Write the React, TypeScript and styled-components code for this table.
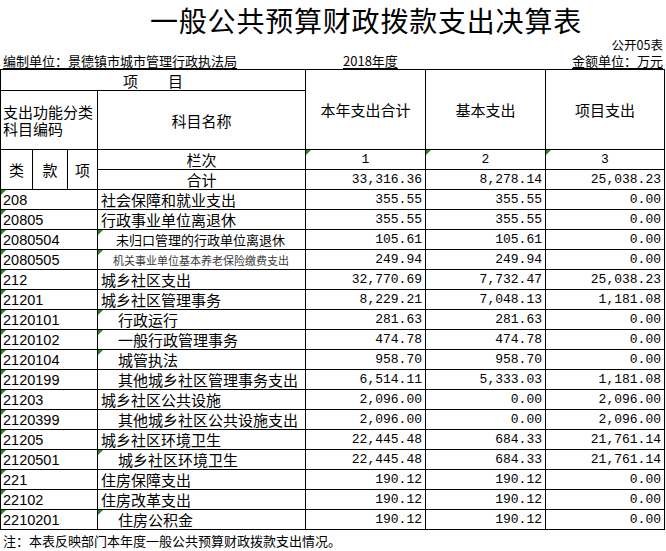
import React from "react";
import styled, { createGlobalStyle, css } from "styled-components";

const GlobalStyle = createGlobalStyle`
  html, body {
    margin: 0;
    padding: 0;
    background: #ffffff;
  }
  body {
    font-family: "Noto Sans CJK SC", "Liberation Sans", sans-serif;
    color: #000;
  }
`;

const CJK = `"Noto Sans CJK SC", "Liberation Sans", sans-serif`;
const MONO = `"Liberation Mono", "Noto Sans CJK SC", monospace`;

const Page = styled.div`
  width: 666px;
  height: 551px;
  overflow: hidden;
  display: flex;
  flex-direction: column;
`;

const Title = styled.h1`
  box-sizing: border-box;
  margin: 0;
  height: 37px;
  padding: 3px 0 0 66px;
  font-family: ${CJK};
  font-weight: 400;
  font-size: 28px;
  letter-spacing: 0.8px;
  line-height: 34px;
  text-align: center;
`;

const FormNo = styled.div`
  height: 14px;
  padding-right: 3px;
  font-family: ${CJK};
  font-size: 12.5px;
  line-height: 16px;
  text-align: right;
`;

const MetaRow = styled.div`
  height: 19px;
  display: flex;
  align-items: flex-end;
  padding: 0 3px;
  font-family: ${CJK};
  font-size: 13px;
  line-height: 17px;
`;

const MetaText = styled.span<{ $width?: number }>`
  text-decoration: underline;
  text-underline-offset: 2px;
  white-space: nowrap;
  ${(p) => p.$width !== undefined && css`width: ${p.$width}px;`}
`;

const MetaRight = styled(MetaText)`
  margin-left: auto;
`;

const Table = styled.table`
  border-collapse: collapse;
  table-layout: fixed;
  width: 664px;
  font-family: ${CJK};
`;

const Row = styled.tr<{ $h: number }>`
  height: ${(p) => p.$h}px;
`;

const triangle = css`
  position: relative;
  &::before {
    content: "";
    position: absolute;
    left: 0;
    top: 0;
    width: 0;
    height: 0;
    border-top: 5px solid #1f8a1f;
    border-right: 5px solid transparent;
  }
`;

const HeadCell = styled.th<{ $align?: "left" | "center"; $tri?: boolean; $mono?: boolean }>`
  border: 1px solid #000;
  padding: 0 2px;
  font-weight: 400;
  font-size: 15px;
  line-height: 17px;
  text-align: ${(p) => p.$align ?? "center"};
  vertical-align: middle;
  ${(p) => p.$mono && css`font-family: ${MONO}; font-size: 13px;`}
  ${(p) => p.$tri && triangle}
`;

const CodeCell = styled.td`
  border: 1px solid #000;
  padding: 0 2px;
  font-family: "Liberation Sans", sans-serif;
  font-size: 14.5px;
  line-height: 18px;
  white-space: nowrap;
  ${triangle}
`;

type Variant = "normal" | "indent" | "indentSmall" | "indentTiny";

const nameStyles: Record<Variant, ReturnType<typeof css>> = {
  normal: css`font-size: 15px; padding-left: 3px;`,
  indent: css`font-size: 15px; padding-left: 20px;`,
  indentSmall: css`font-size: 13px; padding-left: 18px;`,
  indentTiny: css`font-size: 11px; padding-left: 15px; color: #3a3a3a;`,
};

const NameCell = styled.td<{ $variant: Variant; $tri?: boolean }>`
  border: 1px solid #000;
  padding-top: 0;
  padding-bottom: 0;
  padding-right: 2px;
  line-height: 18px;
  white-space: nowrap;
  overflow: hidden;
  ${(p) => nameStyles[p.$variant]}
  ${(p) => p.$tri && triangle}
`;

const NumCell = styled.td`
  border: 1px solid #000;
  padding: 0 3px 0 0;
  font-family: ${MONO};
  font-size: 13px;
  line-height: 18px;
  text-align: right;
  white-space: nowrap;
`;

const Note = styled.div`
  height: 21px;
  padding-left: 3px;
  font-family: ${CJK};
  font-size: 13px;
  line-height: 22px;
`;

type DataRow = {
  code: string;
  name: string;
  variant: Variant;
  tri: boolean;
  total: string;
  basic: string;
  project: string;
};

const rows: DataRow[] = [
  { code: "208", name: "社会保障和就业支出", variant: "normal", tri: false, total: "355.55", basic: "355.55", project: "0.00" },
  { code: "20805", name: "行政事业单位离退休", variant: "normal", tri: false, total: "355.55", basic: "355.55", project: "0.00" },
  { code: "2080504", name: "未归口管理的行政单位离退休", variant: "indentSmall", tri: true, total: "105.61", basic: "105.61", project: "0.00" },
  { code: "2080505", name: "机关事业单位基本养老保险缴费支出", variant: "indentTiny", tri: true, total: "249.94", basic: "249.94", project: "0.00" },
  { code: "212", name: "城乡社区支出", variant: "normal", tri: false, total: "32,770.69", basic: "7,732.47", project: "25,038.23" },
  { code: "21201", name: "城乡社区管理事务", variant: "normal", tri: false, total: "8,229.21", basic: "7,048.13", project: "1,181.08" },
  { code: "2120101", name: "行政运行", variant: "indent", tri: true, total: "281.63", basic: "281.63", project: "0.00" },
  { code: "2120102", name: "一般行政管理事务", variant: "indent", tri: true, total: "474.78", basic: "474.78", project: "0.00" },
  { code: "2120104", name: "城管执法", variant: "indent", tri: true, total: "958.70", basic: "958.70", project: "0.00" },
  { code: "2120199", name: "其他城乡社区管理事务支出", variant: "indent", tri: false, total: "6,514.11", basic: "5,333.03", project: "1,181.08" },
  { code: "21203", name: "城乡社区公共设施", variant: "normal", tri: false, total: "2,096.00", basic: "0.00", project: "2,096.00" },
  { code: "2120399", name: "其他城乡社区公共设施支出", variant: "indent", tri: false, total: "2,096.00", basic: "0.00", project: "2,096.00" },
  { code: "21205", name: "城乡社区环境卫生", variant: "normal", tri: false, total: "22,445.48", basic: "684.33", project: "21,761.14" },
  { code: "2120501", name: "城乡社区环境卫生", variant: "indent", tri: true, total: "22,445.48", basic: "684.33", project: "21,761.14" },
  { code: "221", name: "住房保障支出", variant: "normal", tri: false, total: "190.12", basic: "190.12", project: "0.00" },
  { code: "22102", name: "住房改革支出", variant: "normal", tri: false, total: "190.12", basic: "190.12", project: "0.00" },
  { code: "2210201", name: "住房公积金", variant: "indent", tri: true, total: "190.12", basic: "190.12", project: "0.00" },
];

const colWidths = [32, 35, 30, 208, 120, 120, 119];

export default function App() {
  return (
    <>
      <GlobalStyle />
      <Page>
        <Title>一般公共预算财政拨款支出决算表</Title>
        <FormNo>公开05表</FormNo>
        <MetaRow>
          <MetaText $width={340}>编制单位：景德镇市城市管理行政执法局</MetaText>
          <MetaText>2018年度</MetaText>
          <MetaRight>金额单位：万元</MetaRight>
        </MetaRow>
        <Table>
          <colgroup>
            {colWidths.map((w, i) => (
              <col key={i} style={{ width: w }} />
            ))}
          </colgroup>
          <thead>
            <Row $h={21}>
              <HeadCell colSpan={4}>项　　目</HeadCell>
              <HeadCell rowSpan={2}>本年支出合计</HeadCell>
              <HeadCell rowSpan={2}>基本支出</HeadCell>
              <HeadCell rowSpan={2}>项目支出</HeadCell>
            </Row>
            <Row $h={59}>
              <HeadCell colSpan={3} $align="left">
                支出功能分类
                <br />
                科目编码
              </HeadCell>
              <HeadCell>科目名称</HeadCell>
            </Row>
            <Row $h={20}>
              <HeadCell rowSpan={2}>类</HeadCell>
              <HeadCell rowSpan={2}>款</HeadCell>
              <HeadCell rowSpan={2}>项</HeadCell>
              <HeadCell>栏次</HeadCell>
              <HeadCell $mono $tri>1</HeadCell>
              <HeadCell $mono $tri>2</HeadCell>
              <HeadCell $mono $tri>3</HeadCell>
            </Row>
            <Row $h={20}>
              <HeadCell>合计</HeadCell>
              <NumCell>33,316.36</NumCell>
              <NumCell>8,278.14</NumCell>
              <NumCell>25,038.23</NumCell>
            </Row>
          </thead>
          <tbody>
            {rows.map((r) => (
              <Row $h={20} key={r.code}>
                <CodeCell colSpan={3}>{r.code}</CodeCell>
                <NameCell $variant={r.variant} $tri={r.tri}>
                  {r.name}
                </NameCell>
                <NumCell>{r.total}</NumCell>
                <NumCell>{r.basic}</NumCell>
                <NumCell>{r.project}</NumCell>
              </Row>
            ))}
          </tbody>
        </Table>
        <Note>注：本表反映部门本年度一般公共预算财政拨款支出情况。</Note>
      </Page>
    </>
  );
}
